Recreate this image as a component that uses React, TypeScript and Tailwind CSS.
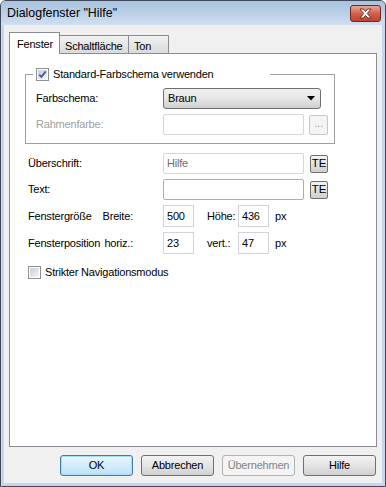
import React from 'react';

function Checkbox({ checked }: { checked?: boolean }) {
  return (
    <span className="flex w-[13px] h-[13px] shrink-0 border border-[#8e8f8f] bg-white p-[1px]">
      <span className="flex flex-1 items-center justify-center bg-gradient-to-br from-[#c9ccd2] to-[#f7f7f7]">
        {checked && (
          <svg width="9" height="9" viewBox="0 0 9 9">
            <path d="M1.2 4.6 L3.4 6.9 L7.8 1.4" fill="none" stroke="#4060a8" strokeWidth="1.9" />
          </svg>
        )}
      </span>
    </span>
  );
}

function Field({ value, muted, className }: { value?: string; muted?: boolean; className: string }) {
  return (
    <div
      className={
        'flex h-[21px] items-center rounded-[2px] border bg-white pl-[3px] ' +
        (muted ? 'border-[#d6d6d6] ' : 'border-[#abadb3] ') +
        className
      }
    >
      <span className={muted ? 'text-[#6d6d6d]' : 'text-black'}>{value}</span>
    </div>
  );
}

function NumField({ value }: { value: string }) {
  return (
    <div className="flex h-[22px] w-[31px] items-center border border-[#d0d4da] bg-white pl-[3px]">
      {value}
    </div>
  );
}

function TeButton() {
  return (
    <div className="ml-[6px] flex h-[18px] w-[18px] items-center justify-center rounded-[2px] border border-[#707070] bg-gradient-to-b from-[#f2f2f2] to-[#cfcfcf] text-[11.5px] leading-none">
      TE
    </div>
  );
}

function DlgButton({ label, kind }: { label: string; kind?: 'default' | 'disabled' }) {
  const look =
    kind === 'default'
      ? 'border-[#3c7fb1] bg-gradient-to-b from-[#eaf6fd] to-[#bde2f8] text-black shadow-[inset_0_0_0_1px_#a9dcf7]'
      : kind === 'disabled'
      ? 'border-[#adb2b5] bg-[#f4f4f4] text-[#838383]'
      : 'border-[#707070] bg-gradient-to-b from-[#f3f3f3] via-[#e4e4e4] to-[#d0d0d0] text-black';
  return (
    <div className={'flex h-[21px] w-[73px] items-center justify-center rounded-[3px] border ' + look}>
      {label}
    </div>
  );
}

function Tab({ label, active, w }: { label: string; active?: boolean; w: string }) {
  return active ? (
    <div className={'relative z-10 flex h-[22px] items-start border border-b-0 border-[#898c95] bg-white pl-[7px] pt-[3px] ' + w}>
      {label}
    </div>
  ) : (
    <div className={'flex h-[19px] items-start border border-b-0 border-l-0 border-[#898c95] bg-gradient-to-b from-[#f2f2f2] to-[#d9d9d9] pl-[5px] pt-[2px] ' + w}>
      {label}
    </div>
  );
}

export default function App() {
  return (
    <div className="flex h-[487px] w-[386px] flex-col overflow-hidden rounded-t-[6px] border border-[#3e4a58] bg-[#c4d7ed] font-['Liberation_Sans',Arial,sans-serif] text-[11px] tracking-[-0.2px] text-black">
      {/* title bar */}
      <div className="flex h-[24px] shrink-0 items-center justify-between bg-gradient-to-b from-[#a8c2de] to-[#cfdff1] pl-[6px] pr-[4px]">
        <span className="text-[12.4px] tracking-normal">Dialogfenster "Hilfe"</span>
        <div className="mt-[1px] flex h-[17px] w-[31px] items-center justify-center rounded-[3px] border border-[#6e2a22] bg-gradient-to-b from-[#e9a896] via-[#d4604a] to-[#c0432f]">
          <svg width="13" height="11" viewBox="0 0 13 11">
            <path
              d="M1 1 H4.2 L6.5 3.5 L8.8 1 H12 L8.3 5.5 L12 10 H8.8 L6.5 7.5 L4.2 10 H1 L4.7 5.5 Z"
              fill="#ffffff"
              stroke="#5a2a26"
              strokeWidth="0.9"
              strokeLinejoin="round"
            />
          </svg>
        </div>
      </div>

      {/* client area */}
      <div className="mx-[3px] mb-[3px] flex flex-1 flex-col bg-[#f0f0f0] px-[5px] pb-[7px] pt-[7px]">
        <div className="-mb-px flex items-end">
          <Tab label="Fenster" active w="w-[51px]" />
          <Tab label="Schaltfläche" w="w-[69px]" />
          <Tab label="Ton" w="w-[40px]" />
        </div>

        <div className="flex flex-1 flex-col border border-[#898c95] bg-white">
          <fieldset className="ml-[15px] mt-[14px] w-[310px] border border-[#a0a0a0] pb-[8px]">
            <legend className="ml-[7px] w-[237px] px-[3px]">
              <div className="flex h-[13px] items-center gap-[4px] leading-[13px]">
                <Checkbox checked />
                <span>Standard-Farbschema verwenden</span>
              </div>
            </legend>
            <div className="ml-[10px] mt-[7px] flex items-center">
              <span className="w-[127px]">Farbschema:</span>
              <div className="flex h-[21px] w-[158px] items-center justify-between rounded-[3px] border border-[#707070] bg-gradient-to-b from-[#f2f2f2] via-[#e6e6e6] to-[#cfcfcf] pl-[4px] pr-[5px]">
                <span>Braun</span>
                <svg width="8" height="5" viewBox="0 0 8 5">
                  <path d="M0 0 H8 L4 4.5 Z" fill="#000" />
                </svg>
              </div>
            </div>
            <div className="ml-[10px] mt-[5px] flex items-center">
              <span className="w-[127px] text-[#a0a0a0]">Rahmenfarbe:</span>
              <div className="h-[21px] w-[141px] rounded-[2px] border border-[#d6d6d6] bg-white" />
              <div className="ml-[5px] flex h-[20px] w-[19px] items-center justify-center rounded-[2px] border border-[#c4c7ca] bg-[#f4f4f4] pb-[3px] text-[#a0a0a0]">
                ...
              </div>
            </div>
          </fieldset>

          <div className="ml-[18px] mt-[9px] flex flex-col gap-[5px]">
            <div className="flex items-center">
              <span className="w-[135px]">Überschrift:</span>
              <Field value="Hilfe" muted className="w-[141px]" />
              <TeButton />
            </div>
            <div className="flex items-center">
              <span className="w-[135px]">Text:</span>
              <Field className="w-[141px]" />
              <TeButton />
            </div>
            <div className="flex items-center">
              <div className="flex w-[135px] justify-between pr-[30px]">
                <span>Fenstergröße</span>
                <span>Breite:</span>
              </div>
              <NumField value="500" />
              <span className="ml-[13px] w-[31px]">Höhe:</span>
              <NumField value="436" />
              <span className="ml-[6px]">px</span>
            </div>
            <div className="flex items-center">
              <div className="flex w-[135px] justify-between pr-[30px]">
                <span>Fensterposition</span>
                <span>horiz.:</span>
              </div>
              <NumField value="23" />
              <span className="ml-[13px] w-[31px]">vert.:</span>
              <NumField value="47" />
              <span className="ml-[6px]">px</span>
            </div>
            <div className="mt-[5px] flex items-center gap-[4px]">
              <Checkbox />
              <span>Strikter Navigationsmodus</span>
            </div>
          </div>
        </div>

        <div className="mt-[8px] flex justify-end gap-[8px] pr-[1px]">
          <DlgButton label="OK" kind="default" />
          <DlgButton label="Abbrechen" />
          <DlgButton label="Übernehmen" kind="disabled" />
          <DlgButton label="Hilfe" />
        </div>
      </div>
    </div>
  );
}
